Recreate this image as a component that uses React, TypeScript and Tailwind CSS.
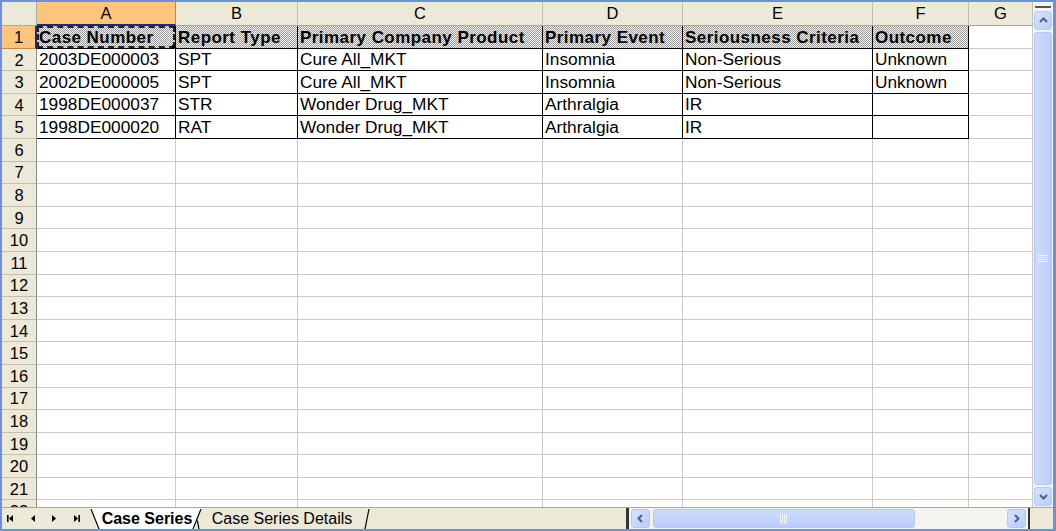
const FONT = "font-['Liberation_Sans',Arial,sans-serif]";

const COLS = [
  { key: "A", w: "w-[139px]" },
  { key: "B", w: "w-[122px]" },
  { key: "C", w: "w-[245px]" },
  { key: "D", w: "w-[140px]" },
  { key: "E", w: "w-[190px]" },
  { key: "F", w: "w-[96px]" },
  { key: "G", w: "flex-1" },
];

const HEADERS = ["Case Number", "Report Type", "Primary Company Product", "Primary Event", "Seriousness Criteria", "Outcome"];

const DATA = [
  ["2003DE000003", "SPT", "Cure All_MKT", "Insomnia", "Non-Serious", "Unknown"],
  ["2002DE000005", "SPT", "Cure All_MKT", "Insomnia", "Non-Serious", "Unknown"],
  ["1998DE000037", "STR", "Wonder Drug_MKT", "Arthralgia", "IR", ""],
  ["1998DE000020", "RAT", "Wonder Drug_MKT", "Arthralgia", "IR", ""],
];

const ROW_COUNT = 22;

function Chevron({ dir }: { dir: "up" | "down" | "left" | "right" }) {
  const pts = {
    up: "2,7 5.5,3.5 9,7",
    down: "2,4 5.5,7.5 9,4",
    left: "7,2 3.5,5.5 7,9",
    right: "4,2 7.5,5.5 4,9",
  }[dir];
  return (
    <svg width="11" height="11" viewBox="0 0 11 11">
      <polyline points={pts} fill="none" stroke="#4d6185" strokeWidth="2" />
    </svg>
  );
}

function ScrollBtn({ dir, className = "" }: { dir: "up" | "down" | "left" | "right"; className?: string }) {
  return (
    <div className={`flex items-center justify-center rounded-[3px] border border-[#b4c8f6] bg-gradient-to-br from-[#d6e2fd] to-[#b9cdf9] ${className}`}>
      <Chevron dir={dir} />
    </div>
  );
}

// sheet navigation arrows: first / prev / next / last
function NavIcon({ kind }: { kind: "first" | "prev" | "next" | "last" }) {
  return (
    <svg width="9" height="9" viewBox="0 0 9 9">
      {kind === "first" && <rect x="1" y="1" width="1.6" height="7" fill="#000" />}
      {kind === "last" && <rect x="6.4" y="1" width="1.6" height="7" fill="#000" />}
      {(kind === "first" || kind === "prev") && <polygon points="7,1 3,4.5 7,8" fill="#000" />}
      {(kind === "next" || kind === "last") && <polygon points="2,1 6,4.5 2,8" fill="#000" />}
    </svg>
  );
}

function Cell({ row, col, text }: { row: number; col: number; text: string }) {
  const inRange = row <= 5 && col < 6;
  const isHead = row === 1 && col < 6;
  const isActive = row === 1 && col === 0;
  const border = inRange ? "border-r border-b border-black" : "border-r border-b border-[#cacaca]";
  const bg = isHead
    ? "bg-[repeating-conic-gradient(#9a9a9a_0_25%,#f4f4f4_0_50%)] bg-[length:2px_2px]"
    : "bg-white";
  return (
    <div className={`relative h-full shrink-0 ${COLS[col].w} ${border} ${bg} flex items-center overflow-hidden whitespace-nowrap pl-[2px] pt-[1px]`}>
      {isActive && (
        <>
          <div className="absolute inset-0 border-2 border-dashed border-[#222]" />
          <div className="absolute bottom-[-2px] right-[-2px] h-[5px] w-[5px] bg-black" />
        </>
      )}
      <span className={isHead ? "relative text-[17px] font-bold tracking-[0.45px] text-black" : "text-[17.3px] text-black"}>{text}</span>
    </div>
  );
}

function Row({ n }: { n: number }) {
  const values = n === 1 ? HEADERS : DATA[n - 2] ?? [];
  const sel = n === 1;
  return (
    <div className="flex h-[22.6px] shrink-0">
      <div
        className={`flex w-[35px] shrink-0 items-center justify-center border-b pt-[1px] text-[16.5px] ${
          sel ? "border-b-[#c08a40] border-r-2 border-r-[#1c2a78] bg-[#ffc57c]" : "border-b-[#c2bfae] border-r border-r-[#8e8c80] bg-[#ece9d8]"
        }`}
      >
        {n}
      </div>
      {COLS.map((c, i) => (
        <Cell key={c.key} row={n} col={i} text={values[i] ?? ""} />
      ))}
    </div>
  );
}

function Tab({ label, active }: { label: string; active?: boolean }) {
  return (
    <div className={`relative flex h-full items-center ${active ? "z-10 w-[112px] justify-center pl-[2px]" : "ml-[-8px] w-[176px] justify-center"}`}>
      <svg className="absolute inset-0" width="100%" height="100%" viewBox="0 0 100 22" preserveAspectRatio="none">
        {active ? (
          <polygon points="0,0 100,0 93,22 7,22" fill="#ffffff" stroke="none" />
        ) : (
          <polygon points="0,0 100,0 96,22 4,22" fill="#ece9d8" stroke="none" />
        )}
      </svg>
      <svg className="absolute left-0 top-0" width="12" height="22" viewBox="0 0 12 22">
        <line x1="1" y1="1" x2={active ? 9 : 5} y2="21" stroke="#000" strokeWidth="1.2" />
      </svg>
      <svg className="absolute right-0 top-0" width="12" height="22" viewBox="0 0 12 22">
        <line x1="11" y1="1" x2={active ? 3 : 7} y2="21" stroke="#000" strokeWidth="1.2" />
      </svg>
      <span className={`relative text-[16px] ${active ? "font-bold" : ""}`}>{label}</span>
    </div>
  );
}

export default function App() {
  const rows = Array.from({ length: ROW_COUNT }, (_, i) => i + 1);
  return (
    <div className={`${FONT} flex h-[531px] w-[1056px] flex-col overflow-hidden border-b-2 border-l-2 border-r-[3px] border-t-2 border-[#6f8fd8] bg-white text-black`}>
      <div className="flex min-h-0 flex-1">
        {/* sheet */}
        <div className="flex min-w-0 flex-1 flex-col overflow-hidden">
          <div className="flex h-[24px] shrink-0 text-[16.5px]">
            <div className="w-[35px] shrink-0 border-b border-r border-[#aca899] bg-[#ece9d8]" />
            {COLS.map((c, i) => (
              <div
                key={c.key}
                className={`${c.w} flex shrink-0 items-center justify-center border-r ${
                  i === 0
                    ? "border-b-2 border-b-[#1c2a78] border-r-[#c08a40] bg-[#ffc57c]"
                    : "border-b border-b-[#aca899] border-r-[#c2bfae] bg-[#ece9d8]"
                }`}
              >
                {c.key}
              </div>
            ))}
          </div>
          <div className="flex min-h-0 flex-1 flex-col overflow-hidden">
            {rows.map((n) => (
              <Row key={n} n={n} />
            ))}
          </div>
        </div>
        {/* vertical scrollbar */}
        <div className="flex w-[20px] shrink-0 flex-col bg-[#f4f3ee] px-[1px]">
          <div className="mx-[1px] mt-[4px] h-[3px] shrink-0 border-t-2 border-[#555]" />
          <ScrollBtn dir="up" className="mt-[2px] h-[19px] shrink-0" />
          <div className="my-[2px] flex flex-1 items-center justify-center rounded-[3px] border border-[#b4c8f6] bg-gradient-to-r from-[#cddbfd] to-[#bccffa]">
            <svg width="10" height="8" viewBox="0 0 10 8">
              {[0, 2, 4, 6].map((y) => (
                <line key={y} x1="0" y1={y + 0.5} x2="10" y2={y + 0.5} stroke="#eef3ff" strokeWidth="1" />
              ))}
            </svg>
          </div>
          <ScrollBtn dir="down" className="mb-[1px] h-[19px] shrink-0" />
        </div>
      </div>
      {/* tabs + horizontal scrollbar */}
      <div className="flex h-[22px] shrink-0 items-stretch border-t border-[#aca899] bg-[#ece9d8]">
        <div className="flex w-[88px] shrink-0 items-center gap-[13px] pl-[4px]">
          <NavIcon kind="first" />
          <NavIcon kind="prev" />
          <NavIcon kind="next" />
          <NavIcon kind="last" />
        </div>
        <div className="flex w-[536px] shrink-0 items-stretch">
          <Tab label="Case Series" active />
          <Tab label="Case Series Details" />
        </div>
        <div className="w-[3px] shrink-0 bg-[#333]" />
        <div className="flex w-[399px] shrink-0 items-center gap-[3px] bg-[#f4f3ee] px-[2px]">
          <ScrollBtn dir="left" className="h-[19px] w-[19px] shrink-0" />
          <div className="flex h-[19px] w-[262px] shrink-0 items-center justify-center rounded-[3px] border border-[#b4c8f6] bg-gradient-to-b from-[#cddbfd] to-[#bccffa]">
            <svg width="8" height="10" viewBox="0 0 8 10">
              {[0, 2, 4, 6].map((x) => (
                <line key={x} x1={x + 0.5} y1="0" x2={x + 0.5} y2="10" stroke="#eef3ff" strokeWidth="1" />
              ))}
            </svg>
          </div>
          <div className="flex-1" />
          <ScrollBtn dir="right" className="h-[19px] w-[19px] shrink-0" />
        </div>
        <div className="w-[2px] shrink-0 bg-[#333]" />
        <div className="flex-1 bg-[#ece9d8]" />
      </div>
    </div>
  );
}
